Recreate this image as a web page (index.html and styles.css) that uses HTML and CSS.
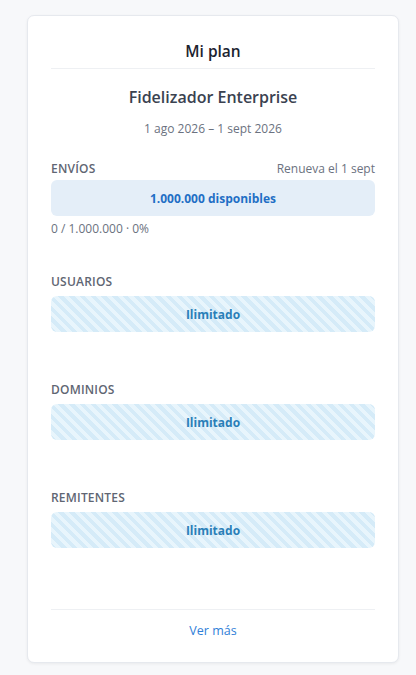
FILE: index.html
```html
<!DOCTYPE html>
<html lang="es">
<head>
    <meta charset="UTF-8">
    <meta name="viewport" content="width=device-width, initial-scale=1.0">
    <title>Mi plan</title>
    <link rel="stylesheet" href="styles.css">
</head>
<body>
    <div class="card">
        <h2 class="card-title">Mi plan</h2>
        <div class="plan-name">Fidelizador Enterprise</div>
        <div class="plan-period">1 ago 2026 – 1 sept 2026</div>

        <div class="usage usage-main">
            <div class="usage-head">
                <span class="usage-label">Envíos</span>
                <span class="usage-note">Renueva el 1 sept</span>
            </div>
            <div class="bar">1.000.000 disponibles</div>
            <div class="usage-sub">0 / 1.000.000 · 0%</div>
        </div>

        <div class="usage">
            <div class="usage-head">
                <span class="usage-label">Usuarios</span>
            </div>
            <div class="bar bar-unlimited">Ilimitado</div>
        </div>

        <div class="usage">
            <div class="usage-head">
                <span class="usage-label">Dominios</span>
            </div>
            <div class="bar bar-unlimited">Ilimitado</div>
        </div>

        <div class="usage">
            <div class="usage-head">
                <span class="usage-label">Remitentes</span>
            </div>
            <div class="bar bar-unlimited">Ilimitado</div>
        </div>

        <div class="card-footer">
            <a href="#" class="more-link">Ver más</a>
        </div>
    </div>
</body>
</html>
```

FILE: styles.css
```css
body {
    font-family: 'Open Sans', 'Noto Sans', Arial, sans-serif;
    background: #f7f8fa;
    color: #1f2937;
    margin: 0;
    padding: 15px 17px 12px 27px;
}
.card {
    background: #fff;
    border: 1px solid #e6e9ee;
    border-radius: 7px;
    box-shadow: 0 1px 3px rgba(0, 0, 0, 0.06);
    padding: 0 23px;
    height: 648px;
    box-sizing: border-box;
    display: flex;
    flex-direction: column;
}
.card-title {
    font-size: 15.5px;
    font-weight: 600;
    text-align: center;
    margin: 0;
    padding: 24px 0 6px;
    border-bottom: 1px solid #eef0f3;
    color: #1c2330;
}
.plan-name {
    text-align: center;
    font-size: 16px;
    font-weight: 600;
    color: #3a4250;
    margin-top: 17px;
}
.plan-period {
    text-align: center;
    font-size: 12px;
    color: #6b7280;
    margin-top: 12px;
}
.usage {
    margin-top: 21px;
    height: 87px;
}
.usage-main {
    margin-top: 23px;
    height: 92px;
}
.usage-head {
    display: flex;
    justify-content: space-between;
    align-items: baseline;
    margin-bottom: 6px;
}
.usage-main .usage-head {
    margin-bottom: 3px;
}
.usage-label {
    font-size: 12px;
    font-weight: 600;
    text-transform: uppercase;
    color: #5f6673;
    letter-spacing: 0.2px;
}
.usage-note {
    font-size: 12px;
    color: #6b7280;
}
.bar {
    height: 36px;
    border-radius: 6px;
    background: #e4eef8;
    display: flex;
    align-items: center;
    justify-content: center;
    font-size: 12px;
    font-weight: 700;
    color: #1f6fc5;
}
.bar-unlimited {
    background: repeating-linear-gradient(45deg, #d5ebf8 0 3.8px, #e8f5fc 3.8px 7.6px);
    color: #2a7fb8;
}
.usage-sub {
    font-size: 12px;
    color: #6b7280;
    margin-top: 4px;
}
.card-footer {
    margin-top: auto;
    border-top: 1px solid #eef0f3;
    text-align: center;
    padding: 8px 0 22px;
}
.more-link {
    font-size: 12.5px;
    color: #2f80d8;
    text-decoration: none;
}
```
